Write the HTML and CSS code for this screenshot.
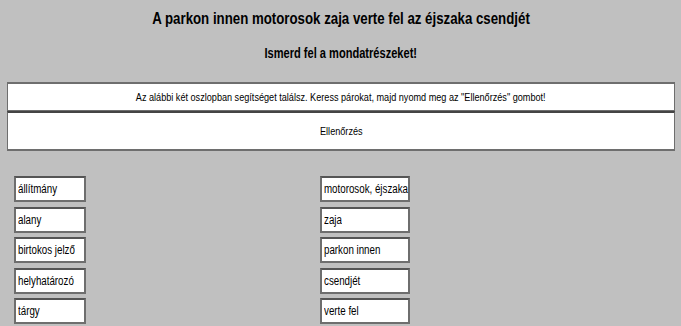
FILE: index.html
```html
<!DOCTYPE html>
<html>
<head>
  <meta charset="utf-8">
  <title>Mondatrészek</title>
  <link rel="stylesheet" href="styles.css">
</head>
<body>
  <h1 class="title"><span class="narrow">A parkon innen motorosok zaja verte fel az éjszaka csendjét</span></h1>
  <h2 class="subtitle"><span class="narrow">Ismerd fel a mondatrészeket!</span></h2>
  <div class="panel"><span class="narrow">Az alábbi két oszlopban segítséget találsz. Keress párokat, majd nyomd meg az "Ellenőrzés" gombot!</span></div>
  <div class="panel check"><span class="narrow">Ellenőrzés</span></div>
  <div class="columns">
    <div class="col">
      <div class="word"><span class="narrow">állítmány</span></div>
      <div class="word"><span class="narrow">alany</span></div>
      <div class="word"><span class="narrow">birtokos jelző</span></div>
      <div class="word"><span class="narrow">helyhatározó</span></div>
      <div class="word"><span class="narrow">tárgy</span></div>
    </div>
    <div class="col right">
      <div class="word wide"><span class="narrow">motorosok, éjszaka</span></div>
      <div class="word wide"><span class="narrow">zaja</span></div>
      <div class="word wide"><span class="narrow">parkon innen</span></div>
      <div class="word wide"><span class="narrow">csendjét</span></div>
      <div class="word wide"><span class="narrow">verte fel</span></div>
    </div>
  </div>
</body>
</html>
```

FILE: styles.css
```css
body {
  margin: 0;
  padding: 0 6px 0 7px;
  background-color: #c0c0c0;
  font-family: "Liberation Sans", Arial, sans-serif;
  color: #000;
}

.narrow {
  display: inline-block;
  white-space: nowrap;
  transform: scaleX(0.78);
}

.title {
  margin: 0;
  padding-top: 9px;
  height: 22px;
  line-height: 20px;
  font-size: 17px;
  text-align: center;
}

.subtitle {
  margin: 0;
  padding-top: 14px;
  line-height: 16px;
  font-size: 14.2px;
  text-align: center;
}

.panel {
  margin-top: 21px;
  height: 26px;
  line-height: 26px;
  background-color: #fff;
  border: 1px solid #6e6e6e;
  border-top: 2px solid #6e6e6e;
  font-size: 11.7px;
  text-align: center;
}

.check {
  margin-top: 0;
  height: 36px;
  line-height: 36px;
  border-top: 2px solid #444;
  border-bottom: 2px solid #6e6e6e;
  cursor: pointer;
}

.columns {
  display: flex;
  padding-top: 25px;
}

.col {
  display: flex;
  flex-direction: column;
  gap: 4.5px;
  padding-left: 7px;
  width: 299px;
}

.word {
  width: 66px;
  height: 22px;
  line-height: 22px;
  padding-left: 2px;
  background-color: #fff;
  border: 2px solid #6e6e6e;
  border-top-color: #555;
  font-size: 12.5px;
  white-space: nowrap;
}

.word .narrow {
  transform-origin: left center;
}

.wide {
  width: 84px;
}
```
